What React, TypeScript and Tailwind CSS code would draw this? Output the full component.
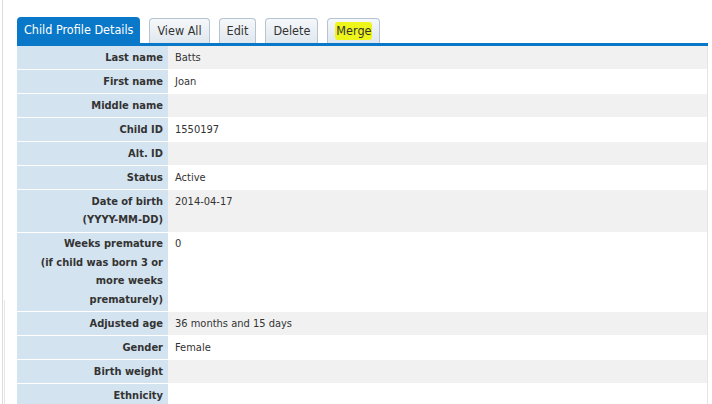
const rows: { label: string[]; value: string }[] = [
  { label: ["Last name"], value: "Batts" },
  { label: ["First name"], value: "Joan" },
  { label: ["Middle name"], value: "" },
  { label: ["Child ID"], value: "1550197" },
  { label: ["Alt. ID"], value: "" },
  { label: ["Status"], value: "Active" },
  { label: ["Date of birth", "(YYYY-MM-DD)"], value: "2014-04-17" },
  {
    label: ["Weeks premature", "(if child was born 3 or", "more weeks", "prematurely)"],
    value: "0",
  },
  { label: ["Adjusted age"], value: "36 months and 15 days" },
  { label: ["Gender"], value: "Female" },
  { label: ["Birth weight"], value: "" },
  { label: ["Ethnicity"], value: "" },
];

function Tab({ children, active }: { children: React.ReactNode; active?: boolean }) {
  if (active) {
    return (
      <div className="flex h-[26px] items-center rounded-t-[4px] bg-[#0a78c8] px-[7px] text-[12.5px] text-white">
        {children}
      </div>
    );
  }
  return (
    <div className="flex h-[25px] items-center rounded-t-[4px] border border-b-0 border-[#b4c4d2] bg-gradient-to-b from-[#f6f8fa] to-[#dfe7ee] px-[7px] text-[12.5px] text-[#333]">
      {children}
    </div>
  );
}

export default function App() {
  return (
    <div
      className="relative h-[404px] w-[712px] overflow-hidden bg-white"
      style={{ fontFamily: "Tahoma, 'DejaVu Sans Condensed', 'Liberation Sans', sans-serif" }}
    >
      <div className="absolute left-[2px] top-0 h-full w-px bg-[#dcdcdc]" />
      <div className="absolute left-[4px] top-[300px] h-[104px] w-px bg-[#e6e6e6]" />
      <div className="pl-[17px] pr-[4px] pt-[17px]">
        <div className="flex items-end gap-[9px]">
          <Tab active>Child Profile Details</Tab>
          <Tab>View All</Tab>
          <Tab>Edit</Tab>
          <Tab>Delete</Tab>
          <Tab>
            <span className="rounded-[3px] bg-[#eef51a] px-[1px]">Merge</span>
          </Tab>
        </div>
        <div className="h-[3px] bg-[#0a78c8]" />
        <div className="border-r border-[#e4e4e4]">
          {rows.map((r, i) => (
            <div key={i} className="flex border-b border-white">
              <div className="w-[151px] shrink-0 bg-[#d3e3ef] pb-[2px] pr-[5px] pt-[2.5px] text-right text-[11px] font-bold leading-[18.5px] text-[#333]">
                {r.label.map((l, j) => (
                  <div key={j}>{l}</div>
                ))}
              </div>
              <div
                className={`flex-1 pb-[2px] pl-[7px] pt-[2.5px] text-[11px] leading-[18.5px] text-[#333] ${
                  i % 2 === 0 ? "bg-[#f1f1f1]" : "bg-white"
                }`}
              >
                {r.value}
              </div>
            </div>
          ))}
        </div>
      </div>
    </div>
  );
}
